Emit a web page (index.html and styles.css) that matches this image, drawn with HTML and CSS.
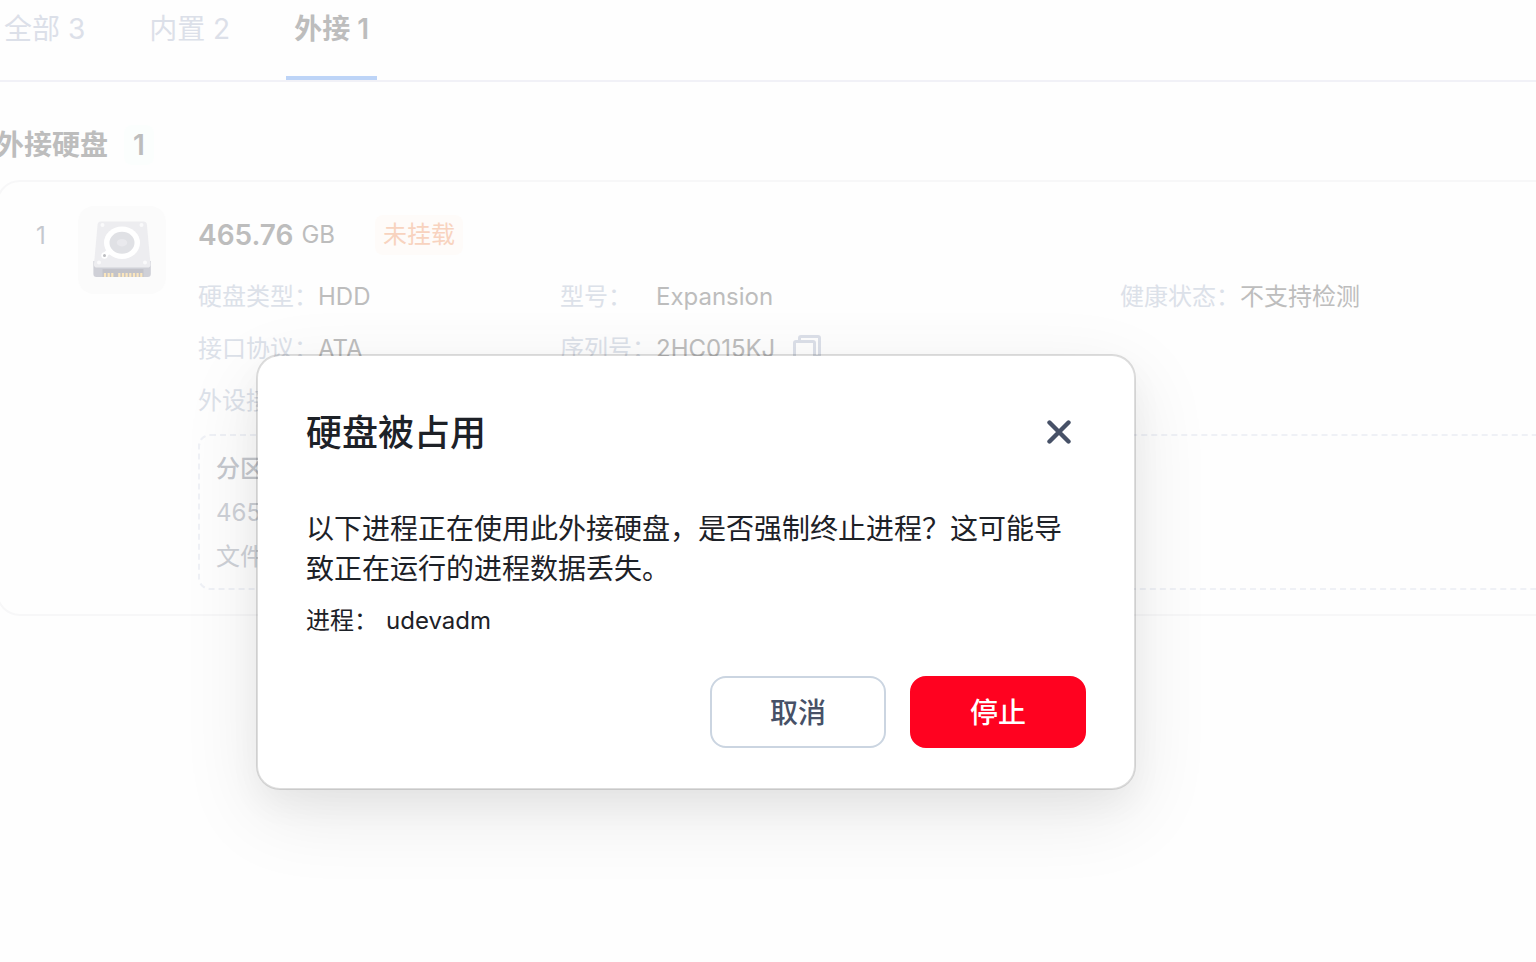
FILE: index.html
```html
<!DOCTYPE html>
<html lang="zh-CN">
<head>
<meta charset="utf-8">
<meta name="viewport" content="width=device-width, initial-scale=1">
<title>外接硬盘</title>
<link rel="stylesheet" href="styles.css">
</head>
<body>
<div class="page">
  <nav class="tabs">
    <button class="tab" type="button">全部 3</button>
    <button class="tab" type="button">内置 2</button>
    <button class="tab tab-active" type="button">外接 1</button>
  </nav>
  <main class="content">
    <h1 class="section-title">外接硬盘 <span class="count">1</span></h1>
    <article class="card">
      <span class="rank">1</span>
      <div class="disk-icon">
        <svg viewBox="0 0 88 88" width="88" height="88" aria-hidden="true">
          <path d="M15.400 55h57.400v13q0 3-3 3H18.400q-3 0-3-3z" fill="#cfd0d7"/>
          <path d="M24.500 63h41v8h-41z" fill="#c3c3c9"/>
          <path d="M23 15.500h42.500q3 0 3.400 3L72.500 58q.4 3.500-3 3.500H19q-3.400 0-3-3.500L19.600 18.500q.4-3 3.400-3z" fill="#ededf0"/>
          <g fill="#fafafb"><circle cx="24.500" cy="19" r="2"/><circle cx="63.500" cy="19" r="2"/><circle cx="21" cy="56.500" r="2"/><circle cx="67" cy="56.500" r="2"/></g>
          <path d="M26.500 49.500l6-6" stroke="#fff" stroke-width="5" stroke-linecap="round"/>
          <ellipse cx="44" cy="36.700" rx="18" ry="16.200" fill="#fff"/>
          <ellipse cx="44" cy="36.700" rx="12.500" ry="11" fill="#e0e1e5"/>
          <ellipse cx="44" cy="36.700" rx="5.200" ry="3.700" fill="#e9e9ed"/>
          <circle cx="26.500" cy="49.500" r="3.200" fill="#fff"/>
          <circle cx="26.500" cy="49.500" r="1.500" fill="#bbbcc0"/>
          <path d="M27 67v4M30.700 67v4M34.300 67v4M41.300 67v4M45 67v4M48.600 67v4M52.300 67v4M56 67v4M59.600 67v4M63.300 67v4" stroke="#fbe6bd" stroke-width="2.200"/>
        </svg>
      </div>
      <div class="details">
        <div class="capacity"><strong class="size">465.76</strong><span class="unit">GB</span><span class="status">未挂载</span></div>
        <dl class="specs">
          <div class="spec"><dt>硬盘类型：</dt><dd>HDD</dd></div>
          <div class="spec"><dt>型号：</dt><dd>Expansion</dd></div>
          <div class="spec"><dt>健康状态：</dt><dd>不支持检测</dd></div>
          <div class="spec"><dt>接口协议：</dt><dd>ATA</dd></div>
          <div class="spec"><dt>序列号：</dt><dd>2HC015KJ</dd>
            <dd><button class="copy" type="button" aria-label="复制序列号">
              <svg viewBox="0 0 28 28" width="28" height="28" aria-hidden="true" fill="none" stroke="#dce0e9" stroke-width="3"><rect x="1.500" y="6.500" width="20" height="20" rx="1.500"/><path d="M6.500 6V3q0-1.500 1.500-1.500h17q1.500 0 1.500 1.500v17q0 1.500-1.500 1.500h-3"/></svg>
            </button></dd></div>
          <div class="spec spec-wide"><dt>外设接口：</dt></div>
        </dl>
        <section class="partition">
          <h2 class="partition-name">分区</h2>
          <p>465</p>
          <p>文件</p>
        </section>
      </div>
    </article>
  </main>
</div>

<div class="dialog" role="dialog" aria-modal="true" aria-labelledby="dialog-title">
  <header class="dialog-head">
    <h2 class="dialog-title" id="dialog-title">硬盘被占用</h2>
    <button class="close" type="button" aria-label="关闭">
      <svg viewBox="0 0 24 24" width="24" height="24" aria-hidden="true"><path d="M2.500 2.500l19 19M21.500 2.500l-19 19" fill="none" stroke="#475167" stroke-width="4.400" stroke-linecap="round"/></svg>
    </button>
  </header>
  <p class="message">以下进程正在使用此外接硬盘，是否强制终止进程？这可能导致正在运行的进程数据丢失。</p>
  <p class="process"><span>进程：</span><span>udevadm</span></p>
  <footer class="actions">
    <button class="btn" type="button">取消</button>
    <button class="btn btn-danger" type="button">停止</button>
  </footer>
</div>
</body>
</html>
```

FILE: styles.css
```css
* {
  box-sizing: border-box;
  margin: 0;
  padding: 0;
}

body {
  position: relative;
  min-height: 100vh;
  overflow: hidden;
  background: #fefefe;
  color: #bdbdbd;
  font: 24px/32px Inter, "Noto Sans CJK SC", sans-serif;
}

button {
  border: 0;
  background: none;
  color: inherit;
  font: inherit;
  cursor: pointer;
}

.page {
  margin: 0 -24px 0 -4px;
}

.tabs {
  display: flex;
  gap: 48px;
  height: 82px;
  border-bottom: 2px solid #f1f1f7;
}

.tab {
  padding: 0 8px 18px;
  border-bottom: 4px solid transparent;
  color: #dce0e9;
  font-size: 28px;
}

.tab-active {
  border-color: #bdd4f7;
  color: #bdbdbd;
  font-weight: 600;
}

.content {
  padding-top: 43px;
}

.section-title {
  display: flex;
  align-items: center;
  gap: 16px;
  margin-bottom: 15px;
  font-size: 28px;
  font-weight: 600;
  line-height: 40px;
}

.count {
  padding: 0 9px;
  border-radius: 8px;
  background: #fbfefd;
}

.card {
  display: flex;
  align-items: flex-start;
  padding: 24px 0 24px 38px;
  border: 2px solid #f7f7f8;
  border-radius: 24px;
}

.rank {
  width: 42px;
  padding-top: 14px;
  color: #c5c8ce;
}

.disk-icon {
  display: flex;
  margin-right: 32px;
  border-radius: 16px;
  background: #fbfbfb;
}

.details {
  flex: 1;
}

.capacity {
  display: flex;
  align-items: center;
  height: 56px;
  padding-top: 2px;
}

.size {
  margin-right: 8px;
  font-size: 28px;
  font-weight: 600;
}

.status {
  margin-left: 40px;
  padding: 4px 8px;
  border-radius: 8px;
  background: #fefbf9;
  color: #f8d3bf;
}

.specs {
  display: grid;
  grid-template-columns: 362px 560px 1fr;
  row-gap: 20px;
  padding-top: 19px;
}

.spec {
  display: flex;
  align-items: center;
  height: 32px;
}

.spec dt {
  min-width: 96px;
  color: #dce1e9;
}

.spec-wide {
  grid-column: 1 / -1;
}

.copy {
  display: flex;
  margin-left: 18px;
}

.partition {
  display: grid;
  gap: 12px;
  margin-top: 17px;
  padding: 17px 16px 15px;
  border: 2px dashed #eff1f6;
  border-radius: 12px;
  color: #ced1d7;
}

.partition-name {
  color: #c5c8ce;
  font-size: 24px;
  font-weight: 500;
}

.dialog {
  position: absolute;
  top: 354px;
  left: 256px;
  width: 880px;
  max-width: calc(100% - 256px);
  padding: 48px 48px 40px;
  border: 2px solid rgba(0, 0, 0, .13);
  border-radius: 24px;
  background: #fff;
  background-clip: padding-box;
  box-shadow: 0 16px 32px rgba(0, 0, 0, .04), 0 24px 80px rgba(0, 0, 0, .09);
  color: #1d2127;
}

.dialog-head {
  display: flex;
  align-items: center;
  justify-content: space-between;
  height: 56px;
  margin-bottom: 49px;
}

.dialog-title {
  padding-top: 2px;
  font-size: 36px;
  font-weight: 500;
  line-height: 56px;
}

.close {
  display: flex;
  padding: 15px;
}

.message {
  font-size: 28px;
  line-height: 40px;
}

.process {
  display: flex;
  gap: 8px;
  margin-top: 16px;
}

.actions {
  display: flex;
  justify-content: flex-end;
  gap: 24px;
  margin-top: 39px;
}

.btn {
  width: 176px;
  height: 72px;
  padding-top: 2px;
  border: 2px solid #cbd5e1;
  border-radius: 16px;
  color: #475167;
  font-size: 28px;
  font-weight: 500;
}

.btn-danger {
  border-color: #ff0220;
  background: #ff0220;
  color: #fff;
}
```
